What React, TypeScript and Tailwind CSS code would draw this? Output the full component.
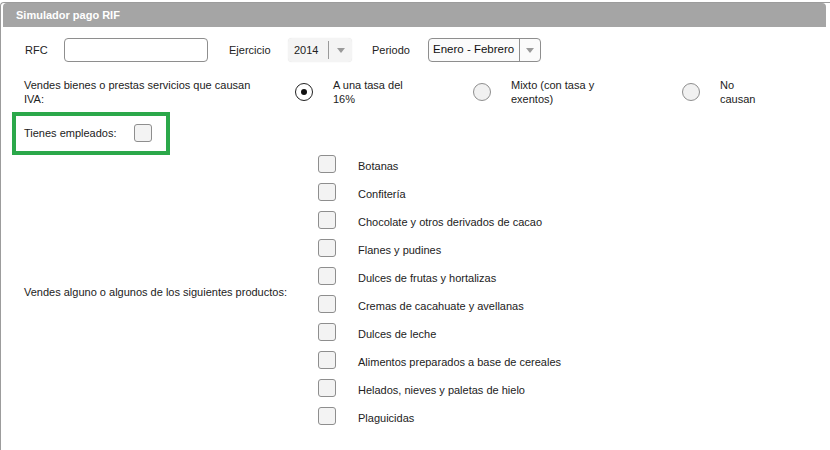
import React from 'react';

const font = { fontFamily: '"Liberation Sans", Arial, sans-serif' };

const products = [
    'Botanas',
    'Confitería',
    'Chocolate y otros derivados de cacao',
    'Flanes y pudines',
    'Dulces de frutas y hortalizas',
    'Cremas de cacahuate y avellanas',
    'Dulces de leche',
    'Alimentos preparados a base de cereales',
    'Helados, nieves y paletas de hielo',
    'Plaguicidas',
];

const Arrow = () => (
    <svg width="8" height="5" viewBox="0 0 8 5">
        <path d="M0 0h8L4 5z" fill="#9a9a9a" />
    </svg>
);

const Checkbox = ({ className = '' }: { className?: string }) => (
    <span
        className={`block h-[18px] w-[18px] shrink-0 rounded-[3px] border border-[#8e8e8e] bg-[#f3f3f3] ${className}`}
    />
);

const Radio = ({ checked }: { checked?: boolean }) =>
    checked ? (
        <span className="flex h-[18px] w-[18px] shrink-0 items-center justify-center rounded-full border-[1.5px] border-[#222] bg-white">
            <span className="h-[6px] w-[6px] rounded-full bg-[#111]" />
        </span>
    ) : (
        <span className="block h-[18px] w-[18px] shrink-0 rounded-full border border-[#8e8e8e] bg-[#f1f1f1]" />
    );

export default function App() {
    return (
        <div className="h-[450px] w-[830px] overflow-hidden bg-white pt-[2px] text-[11px] text-[#222]" style={font}>
            <div className="h-[460px] rounded-tl-[4px] border-t border-l border-[#9c9c9c] pl-[2px] pr-[4px]">
                {/* title bar */}
                <div className="flex h-[24px] items-center rounded-t-[4px] bg-[#a5a5a5] pl-[13px] text-[11px] font-bold text-white">
                    Simulador pago RIF
                </div>

                {/* RFC / ejercicio / periodo */}
                <div className="mt-[11px] flex h-[24px] items-center pl-[22px]">
                    <span className="w-[39px]">RFC</span>
                    <input className="h-[24px] w-[144px] rounded-[4px] border border-[#8e8e8e] bg-white outline-none" />
                    <span className="ml-[21px] w-[59px]">Ejercicio</span>
                    <div className="flex h-[24px] w-[64px] items-stretch rounded-[4px] bg-[#f4f4f4] shadow-[0_0_1px_rgba(0,0,0,0.15)]">
                        <span className="flex w-[40px] items-center pl-[6px] text-[#222]">2014</span>
                        <span className="my-[3px] w-px bg-[#9a9a9a]" />
                        <span className="flex flex-1 items-center justify-center">
                            <Arrow />
                        </span>
                    </div>
                    <span className="ml-[20px] w-[56px]">Periodo</span>
                    <div className="flex h-[24px] w-[113px] items-stretch rounded-[4px] border border-[#8e8e8e] bg-[#fbfbfb]">
                        <span className="flex w-[90px] items-center pl-[4px] text-[11.5px] text-[#111]">
                            Enero - Febrero
                        </span>
                        <span className="w-px bg-[#8e8e8e]" />
                        <span className="flex flex-1 items-center justify-center">
                            <Arrow />
                        </span>
                    </div>
                </div>

                {/* IVA */}
                <div className="mt-[16px] flex items-center pl-[21px] leading-[14px]">
                    <div className="w-[271px]">
                        <div className="w-[236px]">Vendes bienes o prestas servicios que causan IVA:</div>
                    </div>
                    <Radio checked />
                    <span className="ml-[20px] w-[80px]">A una tasa del 16%</span>
                    <span className="ml-[60px]">
                        <Radio />
                    </span>
                    <span className="ml-[20px] w-[90px]">Mixto (con tasa y exentos)</span>
                    <span className="ml-[81px]">
                        <Radio />
                    </span>
                    <span className="ml-[20px] w-[40px]">No causan</span>
                </div>

                {/* empleados */}
                <div className="mt-[6px] ml-[9px] flex h-[43px] w-[158px] items-center border-4 border-[#2ba84a] pl-[8px]">
                    <span className="w-[110px]">Tienes empleados:</span>
                    <Checkbox className="-mt-[2px]" />
                </div>

                {/* productos */}
                <div className="-mt-[3px] flex items-center pl-[21px]">
                    <div className="w-[294px]">Vendes alguno o algunos de los siguientes productos:</div>
                    <ul>
                        {products.map((p) => (
                            <li key={p} className="flex h-[28px] items-center">
                                <Checkbox className="mb-[4px]" />
                                <span className="ml-[22px]">{p}</span>
                            </li>
                        ))}
                    </ul>
                </div>
            </div>
        </div>
    );
}
